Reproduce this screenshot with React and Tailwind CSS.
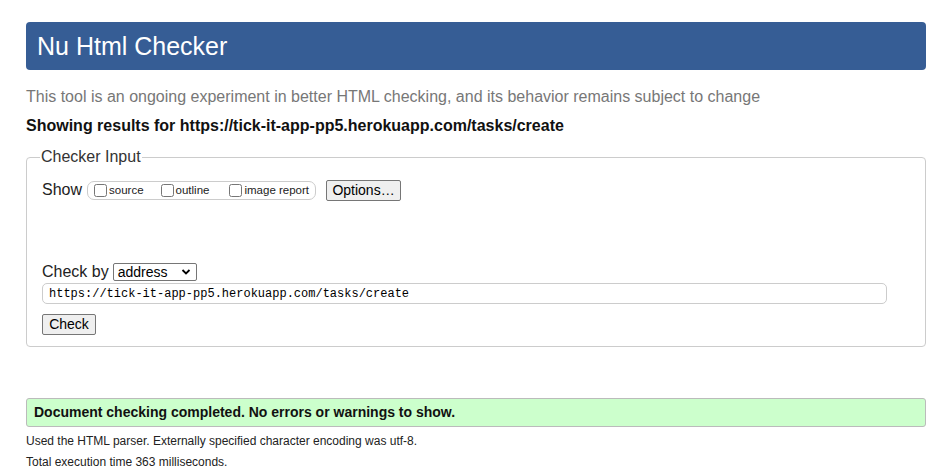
import React from "react";

function Box({ label, className = "" }) {
  return (
    <label className={"flex items-center " + className}>
      <input type="checkbox" className="m-0 h-[13px] w-[13px]" />
      <span className="ml-[2px] text-[11.5px] leading-[13px] text-[#222]">{label}</span>
    </label>
  );
}

export default function App() {
  return (
    <div className="min-h-[476px] bg-white font-['Liberation_Sans',Arial,sans-serif] text-[#222]">
      <div className="ml-[26px] w-[900px] pt-[22px]">
        <h1 className="h-[48px] rounded-[4px] bg-[#365d95] pl-[11px] text-[25px] leading-[48px] text-white">
          Nu Html Checker
        </h1>
        <p className="mt-[17px] text-[16px] leading-[20px] text-[#777]">
          This tool is an ongoing experiment in better HTML checking, and its behavior remains subject to change
        </p>
        <p className="mt-[9px] text-[16px] font-bold leading-[20px] text-[#111]">
          Showing results for https://tick-it-app-pp5.herokuapp.com/tasks/create
        </p>
        <fieldset className="mt-[11px] h-[200px] rounded-[4px] border border-[#ccc] pl-[13px] pr-[38px]">
          <legend className="px-[1px] text-[16px] leading-[20px] text-[#333]">Checker Input</legend>
          <div className="mt-[12px] flex h-[22px] items-center pl-[2px]">
            <span className="text-[16px] leading-[20px]">Show</span>
            <div className="ml-[5px] flex h-[19px] w-[229px] items-center rounded-[7px] border border-[#ccc] pl-[6px]">
              <Box label="source" />
              <Box label="outline" className="ml-[17px]" />
              <Box label="image report" className="ml-[20px]" />
            </div>
            <button className="ml-[10px] h-[21px] w-[75px] rounded-[2px] border border-[#767676] bg-[#efefef] text-[14px] leading-[19px] text-black">
              Options…
            </button>
          </div>
          <div className="mt-[62px] flex h-[18px] items-center pl-[2px]">
            <span className="text-[16px] leading-[20px]">Check by</span>
            <div className="relative ml-[4px] h-[18px] w-[84px] rounded-[2px] border border-[#767676] bg-white">
              <span className="absolute left-[4px] top-0 text-[14px] leading-[16px] text-black">address</span>
              <svg className="absolute right-[5px] top-[4px]" width="10" height="8" viewBox="0 0 10 8">
                <path d="M1.5 2 L5 5.5 L8.5 2" fill="none" stroke="#000" strokeWidth="1.8" />
              </svg>
            </div>
          </div>
          <div className="mt-[2px] ml-[2px] flex h-[21px] items-center rounded-[5px] border border-[#ccc] pl-[6px]">
            <span className="font-['Liberation_Mono','DejaVu_Sans_Mono',monospace] text-[12px] leading-[14px] text-black">
              https://tick-it-app-pp5.herokuapp.com/tasks/create
            </span>
          </div>
          <div className="mt-[8px] pl-[2px]">
            <button className="h-[21px] w-[54px] rounded-[2px] border border-[#767676] bg-[#efefef] text-[14px] leading-[19px] text-black">
              Check
            </button>
          </div>
        </fieldset>
        <div className="mt-[51px] flex h-[29px] w-[900px] items-center rounded-[3px] border border-[#bbb] bg-[#ccffcc] pl-[7px]">
          <span className="text-[14px] font-bold text-[#111]">Document checking completed. No errors or warnings to show.</span>
        </div>
        <p className="mt-[7px] text-[12px] leading-[14px] text-[#222]">
          Used the HTML parser. Externally specified character encoding was utf-8.
        </p>
        <p className="mt-[7px] text-[12px] leading-[14px] text-[#222]">Total execution time 363 milliseconds.</p>
      </div>
    </div>
  );
}
